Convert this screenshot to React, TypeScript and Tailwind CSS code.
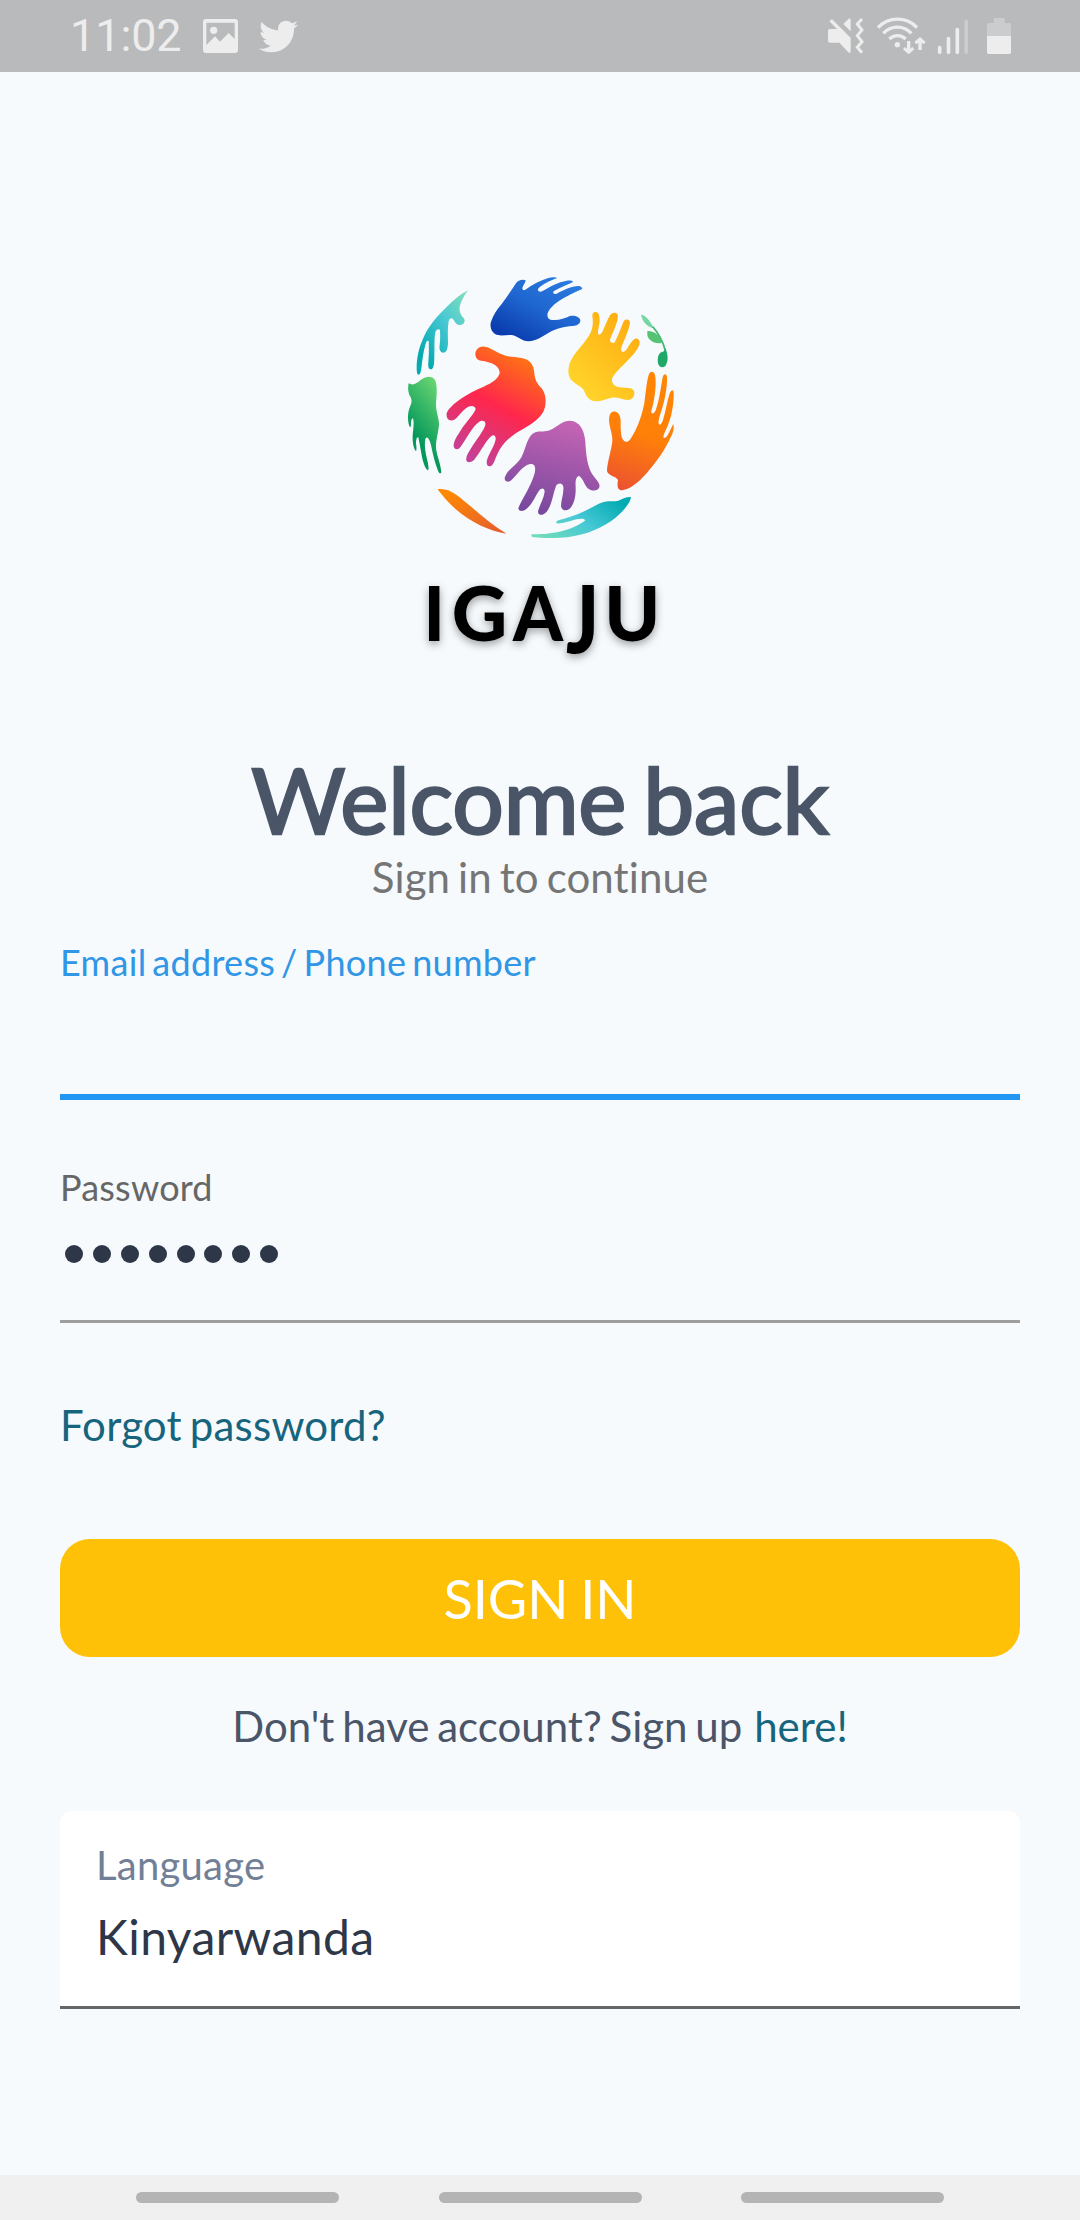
import { FaTwitter } from "react-icons/fa";

function Gradient({ id, from, mid, to, dir }: { id: string; from: string; mid?: string; to: string; dir: number[] }) {
  return (
    <linearGradient id={id} x1={dir[0]} y1={dir[1]} x2={dir[2]} y2={dir[3]}>
      <stop offset="0" stopColor={from} />
      {mid && <stop offset="0.5" stopColor={mid} />}
      <stop offset="1" stopColor={to} />
    </linearGradient>
  );
}

function Logo() {
  return (
    <svg className="mx-auto block h-[420px] w-[300px] shrink-0" viewBox="0 0 900 1260" role="img" aria-label="Igaju">
      <defs>
        <Gradient id="tealTop" from="#86e0b8" mid="#48c8d4" to="#05aab0" dir={[1, 0, 0.2, 0.85]} />
        <Gradient id="blue" from="#2b7ce0" mid="#1f66d0" to="#0a3cae" dir={[0.85, 0, 0.15, 0.9]} />
        <Gradient id="yellow" from="#ffae12" to="#ffd42a" dir={[0.8, 0.1, 0.2, 0.9]} />
        <Gradient id="orange" from="#ff8503" mid="#ff8008" to="#ec5330" dir={[0.5, 0, 0.3, 1]} />
        <Gradient id="green" from="#68d472" to="#04985a" dir={[0.7, 0, 0.4, 0.7]} />
        <Gradient id="red" from="#ff7e0c" mid="#ff264c" to="#c0429c" dir={[0.75, 0, 0.3, 1]} />
        <Gradient id="purple" from="#c664b4" to="#76489e" dir={[0.65, 0, 0.4, 1]} />
        <Gradient id="flame" from="#ff8803" to="#e25c30" dir={[0.3, 0, 1, 1]} />
        <Gradient id="tealLow" from="#70dcb8" mid="#46c8d6" to="#02aab2" dir={[0, 0.8, 1, 0.3]} />
        <filter id="soft" x="-10%" y="-30%" width="120%" height="180%">
          <feDropShadow dx="0" dy="9" stdDeviation="13" floodColor="#000" floodOpacity="0.38" />
        </filter>
      </defs>
      <path fill="url(#tealTop)" d="M236 90C225 100 213 125 209 140C207 155 213 165 221 174C228 183 222 194 210 195C198 195 196 188 190 178C185 172 178 175 176 184C172 205 174 230 174 250C173 270 168 278 160 278C150 277 147 268 149 255C152 235 150 220 150 210C146 205 140 208 137 214C132 230 134 260 133 290C133 315 130 328 123 328C115 328 114 318 115 305C117 285 117 265 116 243C111 240 108 247 106 255C100 275 97 300 94 325C92 340 90 344 85 344C80 343 80 330 80 315C82 280 90 255 103 227C118 195 140 170 165 146C190 120 215 100 236 90Z" />
      <path fill="url(#blue)" d="M378 70C384 60 398 57 407 61C407 68 400 75 397 84C397 90 401 92 406 89C425 75 450 62 475 54C485 51 497 52 502 54C480 62 452 75 444 87C443 95 450 96 456 94C480 80 505 66 530 62C540 61 548 62 549 66C540 71 515 80 492 93C486 99 492 104 500 101C520 90 545 79 565 78C575 79 578 84 576 87C560 95 540 103 515 118C495 130 478 145 473 160C470 172 476 180 488 180C505 182 525 175 540 168C555 165 570 172 571 181C571 192 562 197 548 198C520 200 500 206 480 216C460 228 440 243 415 244C395 244 385 228 365 225C345 224 330 230 315 222C303 214 299 200 303 185C310 165 320 150 335 132C350 112 366 88 378 70Z" />
      <g transform="translate(420 0)">
        <path fill="url(#yellow)" d="M188 175C185 160 190 156 197 156C206 157 209 166 209 180C209 195 203 210 204 221C208 228 214 222 218 214C226 195 232 180 240 166C246 157 255 156 262 162C267 170 261 185 256 200C250 217 242 230 240 240C241 250 250 252 255 245C264 230 272 205 281 184C285 177 295 176 299 184C302 193 294 212 288 228C281 247 273 260 273 271C277 280 285 275 290 268C298 256 304 245 312 238C320 232 330 238 329 250C325 270 305 290 285 310C267 328 252 342 246 357C244 370 254 379 265 381C280 385 300 380 310 390C318 402 310 420 293 420C275 419 262 411 245 413C225 417 210 427 190 423C172 418 168 405 161 390C150 375 128 370 119 353C110 330 118 305 133 284C150 260 172 240 183 215C189 200 189 190 188 175Z" />
        <path fill="#76d6a4" d="M333 164C345 165 360 180 371 204C355 203 338 188 333 164Z" />
        <path fill="none" stroke="#45b876" strokeWidth="5" d="M368 200C384 218 398 242 406 272" />
        <path fill="#55c274" d="M352 213C370 212 388 222 396 248C380 253 360 245 354 232C350 225 353 218 352 213Z" />
        <path fill="#1fa868" d="M404 262C415 280 416 305 406 318C398 325 387 322 384 310C382 292 385 280 396 276C402 275 405 272 404 262Z" />
      </g>
      <g transform="translate(0 420)">
        <path fill="url(#green)" d="M56 -50C70 -42 80 -50 92 -60C105 -70 125 -75 135 -60C143 -45 140 -10 138 10C137 35 148 55 147 75C145 100 137 120 138 145C141 170 152 190 154 218C150 223 147 218 144 212C135 190 128 160 123 135C119 118 110 105 106 118C102 140 108 165 113 185C116 200 117 210 113 211C105 205 98 185 94 160C90 140 88 125 85 112C80 110 78 118 78 130C80 142 80 152 78 154C70 145 67 125 68 105C71 80 72 65 69 55C64 55 63 65 63 75C62 83 60 82 58 78C52 60 53 35 60 20C66 8 66 0 62 -8C54 -20 53 -38 56 -50Z" />
        <path fill="url(#red)" d="M258 -128C252 -142 260 -158 275 -160C295 -162 315 -145 335 -137C355 -128 375 -130 395 -126C420 -122 432 -105 433 -80C435 -60 440 -50 455 -35C470 -15 470 15 460 35C445 60 420 75 390 92C355 112 335 135 322 162C315 178 312 192 303 198C292 202 288 192 291 180C297 160 313 140 317 118C318 108 312 103 304 108C288 122 275 150 258 172C250 186 238 190 230 184C225 172 235 158 245 142C258 120 280 95 286 75C288 65 280 60 270 64C245 80 232 115 212 140C205 150 195 150 191 140C190 122 202 108 213 90C225 70 250 45 257 28C255 17 245 17 235 20C215 30 205 55 188 61C176 64 168 55 170 40C175 25 200 2 240 -20C275 -40 320 -50 329 -80C330 -100 310 -110 290 -115C275 -117 262 -118 258 -128Z" />
        <path fill="url(#flame)" d="M143 268C160 264 180 270 200 285C240 315 290 365 350 401C300 395 240 365 200 330C175 308 155 285 143 268Z" />
      </g>
      <g transform="translate(420 420)">
        <path fill="url(#orange)" d="M240 80C235 60 236 40 248 35C262 31 271 42 272 62C272 85 272 105 278 118C286 130 295 126 302 116C320 90 335 50 343 10C347 -20 350 -55 356 -75C360 -88 371 -88 375 -75C379 -55 377 -25 370 10C368 20 363 32 364 38C368 44 375 38 378 28C388 0 393 -40 398 -68C401 -80 410 -80 411 -68C412 -40 405 0 395 30C388 52 385 60 386 72C390 78 396 70 399 60C408 30 412 0 420 -22C424 -32 431 -32 431 -22C432 10 425 50 412 80C404 98 399 105 401 114C407 116 412 108 416 100C422 88 426 78 430 72C433 85 430 98 422 112C405 150 380 185 350 220C325 248 300 268 277 271C262 271 261 258 264 240C258 228 235 228 231 213C231 190 244 150 247 125C248 108 243 95 240 80Z" />
        <path fill="url(#purple)" d="M16 97C32 92 45 97 60 90C80 82 95 62 120 62C150 64 163 90 166 125C168 165 172 195 185 220C195 237 212 248 208 262C203 273 188 275 175 266C162 255 160 235 147 228C137 230 136 245 137 262C138 290 132 315 118 327C108 334 95 332 93 318C93 300 102 280 100 260C97 248 85 248 78 258C68 285 66 315 50 335C40 347 25 348 24 335C28 315 42 295 44 275C43 262 34 264 27 272C15 290 5 315 -12 328C-22 336 -34 334 -35 325C-28 305 5 255 14 220C18 200 14 190 0 192C-25 198 -38 225 -58 242C-70 249 -79 243 -75 230C-65 205 -38 195 -25 170C-12 145 -8 105 16 97Z" />
        <path fill="url(#tealLow)" d="M4 403C50 402 110 400 165 362C165 355 155 355 140 358C120 363 95 372 80 370C75 364 85 360 100 357C140 347 180 325 210 310C235 298 255 308 270 300C285 293 297 289 303 292C300 312 275 340 245 362C200 392 150 410 90 413C50 415 15 413 5 410Z" />
      </g>
      <g filter="url(#soft)" fill="#000" fontFamily="Lato, sans-serif" fontWeight="900" fontSize="230">
        <text transform="translate(101 1142) scale(0.9 1)">I</text>
        <text x="185" y="1142">G</text>
        <text transform="translate(369 1142) scale(0.93 1)">A</text>
        <text transform="translate(528 1178) scale(1 1.22)">J</text>
        <text transform="translate(643 1142) scale(0.98 1)">U</text>
      </g>
    </svg>
  );
}

function StatusBar() {
  return (
    <header className="flex h-[72px] shrink-0 items-center bg-[#b9babb] pl-[70px] text-[#ededed]">
      <span className="w-[133px] font-[Roboto,sans-serif] text-[45px] leading-[72px] tracking-[-0.1px]">11:02</span>
      <svg className="h-[34px] w-[35px]" viewBox="0 0 105 102">
        <path fill="currentColor" fillRule="evenodd" d="M9 0H96Q105 0 105 9V93Q105 102 96 102H9Q0 102 0 93V9Q0 0 9 0ZM10 11V78L36 52L51 68L77 42L95 60V11Z" />
        <circle cx="32" cy="34" r="11" fill="currentColor" />
      </svg>
      <FaTwitter className="ml-[20.500px] size-[39px]" />
      <svg className="ml-auto h-[72px] w-[300px]" viewBox="0 0 900 216" fill="currentColor">
        <path d="M148 64L156 58L212 113V155Q210 161 205 157L178 128H150Q144 128 144 122V92Q144 87 150 87H171Z" />
        <path d="M190 72L206 56Q211 53 212 60V94Z" />
        <path d="M246 57L232 72L246 90L232 107L246 125L232 142L246 158" fill="none" stroke="currentColor" strokeWidth="9" />
        <g fill="none" stroke="currentColor" strokeWidth="10">
          <path d="M294 83A80 80 0 0 1 411 83" />
          <path d="M310 100A57 57 0 0 1 394 100" />
          <path d="M328 117A35 35 0 0 1 377 117" />
        </g>
        <circle cx="352" cy="134" r="8" />
        <path d="M381 123H391V146L397 141L403 148L386 163L369 148L375 141L381 146Z" />
        <path d="M415 150H425V128L431 133L437 126L420 111L403 126L409 133L415 128Z" />
        <g stroke="currentColor" strokeWidth="11" strokeLinecap="round">
          <path d="M479 143V157" />
          <path d="M505.500 116V157" />
          <path d="M532 89V157" />
          <path d="M558.500 65V157" stroke="#cbcccd" />
        </g>
        <path fill="#cbcccd" d="M641 58Q641 54 645 54H670Q674 54 674 58V69H689Q693 69 693 73V108H621V73Q621 69 625 69H641Z" />
        <path d="M621 108H693V157Q693 162 688 162H626Q621 162 621 157Z" />
      </svg>
    </header>
  );
}

export default function App() {
  return (
    <div className="flex h-[2220px] w-[1080px] flex-col overflow-hidden bg-[#f6fafd] font-[Lato,sans-serif] [font-variant-ligatures:none]">
      <StatusBar />
      <main className="flex flex-1 flex-col px-[60px] pt-[188px]">
        <Logo />
        <h1 className="mt-[63px] text-center text-[91px] leading-[112px] tracking-[-0.1px] text-[#4a5568] [-webkit-text-stroke:2.5px_#4a5568] [word-spacing:-0.069em]">Welcome back</h1>
        <p className="text-center text-[42px] leading-[44px] tracking-[0.1px] text-[#757575] [word-spacing:-0.069em]">Sign in to continue</p>

        <label className="mt-[41px] flex h-[160px] flex-col border-b-[6px] border-[#2196f3] text-[36px] leading-[44px] tracking-[0.3px] text-[#3096e5] [word-spacing:-0.1em]">
          Email address / Phone number
        </label>

        <div className="mt-[65px] flex h-[158px] flex-col border-b-[3px] border-[#9e9e9e]">
          <span className="text-[36px] leading-[44px] tracking-[0.2px] text-[#666666]">Password</span>
          <div className="mt-[36px] ml-[5px] flex gap-[9.900px]">
            {Array.from({ length: 8 }, (_, i) => (
              <span key={i} className="size-[18px] rounded-full bg-[#2d3748]" />
            ))}
          </div>
        </div>

        <a className="mt-[77px] text-[42px] leading-[50px] tracking-[0.2px] text-[#17657d] [word-spacing:-0.069em]">Forgot password?</a>
        <button className="mt-[89px] h-[118px] rounded-[30px] bg-[#ffc107] pt-[2px] text-[54px] leading-[116px] text-white [word-spacing:-0.04em]">SIGN IN</button>
        <p className="mt-[44px] text-center text-[42px] leading-[50px] text-[#4a5568] [word-spacing:-0.069em]">
          Don't have account? Sign up <a className="ml-[4px] text-[#17657d]">here!</a>
        </p>

        <div className="mt-[60px] flex h-[198px] flex-col rounded-t-[12px] border-b-[3px] border-[#666666] bg-white px-[36px] pt-[29px]">
          <span className="text-[40px] leading-[50px] tracking-[0.25px] text-[#718096]">Language</span>
          <span className="mt-[17px] text-[48px] leading-[60px] tracking-[0.42px] text-[#2d3748]">Kinyarwanda</span>
        </div>
      </main>
      <nav className="flex h-[45px] shrink-0 items-center justify-center gap-[99.500px] bg-[#f0f0f0]">
        <span className="h-[11px] w-[203px] rounded-full bg-[#b4b4b4]" />
        <span className="h-[11px] w-[203px] rounded-full bg-[#b4b4b4]" />
        <span className="h-[11px] w-[203px] rounded-full bg-[#b4b4b4]" />
      </nav>
    </div>
  );
}
